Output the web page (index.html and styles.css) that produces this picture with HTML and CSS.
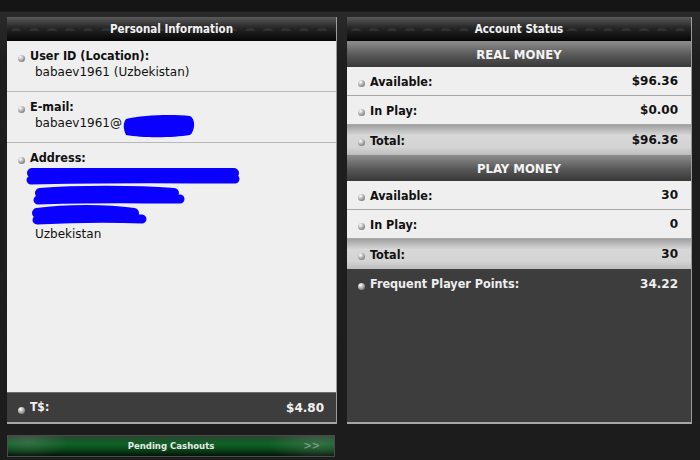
FILE: index.html
```html
<!DOCTYPE html>
<html>
<head>
    <title>Account</title>
    <meta charset="UTF-8">
    <link rel="stylesheet" href="styles.css">
</head>
<body>

<div id="page">

    <div class="column">
        <div class="panel">
            <div class="panel-head">Personal Information</div>
            <div class="info">
                <div class="info-row">
                    <div class="label"><span class="dot"></span>User ID (Location):</div>
                    <div class="value">babaev1961 (Uzbekistan)</div>
                </div>
                <div class="info-row">
                    <div class="label"><span class="dot"></span>E-mail:</div>
                    <div class="value">babaev1961@<svg class="scribble-mail" width="74" height="25" viewBox="0 0 74 25">
                        <path d="M4 5 C20 1 50 0 68 2 C74 5 73 17 68 21 C50 24 20 24 4 21 C1 15 1 9 4 5 Z" fill="#0a00ff"/>
                    </svg></div>
                </div>
                <div class="info-row address">
                    <div class="label"><span class="dot"></span>Address:</div>
                    <svg class="scribble-address" width="220" height="58" viewBox="0 0 220 58">
                        <g stroke="#0a00ff" stroke-linecap="round" fill="none">
                            <path d="M6 5 C60 1 150 2 208 5" stroke-width="10"/>
                            <path d="M5 12 C80 10 150 11 209 11" stroke-width="9"/>
                            <path d="M14 25 C50 22 110 22 148 25" stroke-width="10"/>
                            <path d="M12 32 C60 30 110 31 154 31" stroke-width="9"/>
                            <path d="M11 45 C40 41 80 41 108 45" stroke-width="10"/>
                            <path d="M11 52 C50 50 90 50 116 51" stroke-width="9"/>
                        </g>
                    </svg>
                    <div class="value">Uzbekistan</div>
                </div>
            </div>
            <div class="dark-row">
                <span class="label"><span class="dot"></span>T$:</span>
                <span class="amount">$4.80</span>
            </div>
        </div>
        <div class="cashout">
            Pending Cashouts
            <span class="arrows">&gt;&gt;</span>
        </div>
    </div>

    <div class="panel status">
        <div class="panel-head">Account Status</div>

        <div class="section">REAL MONEY</div>
        <div class="line"><span class="label"><span class="dot"></span>Available:</span><span class="amount">$96.36</span></div>
        <div class="line"><span class="label"><span class="dot"></span>In Play:</span><span class="amount">$0.00</span></div>
        <div class="line total"><span class="label"><span class="dot"></span>Total:</span><span class="amount">$96.36</span></div>

        <div class="section">PLAY MONEY</div>
        <div class="line"><span class="label"><span class="dot"></span>Available:</span><span class="amount">30</span></div>
        <div class="line"><span class="label"><span class="dot"></span>In Play:</span><span class="amount">0</span></div>
        <div class="line total"><span class="label"><span class="dot"></span>Total:</span><span class="amount">30</span></div>

        <div class="line points"><span class="label"><span class="dot"></span>Frequent Player Points:</span><span class="amount">34.22</span></div>
    </div>

</div>

</body>
</html>
```

FILE: styles.css
```css
body{
    margin: 0;
    font-family: "DejaVu Sans", Verdana, sans-serif;
    font-size: 12px;
    color: #111;
    background: linear-gradient(#151515 0, #151515 11px, #2a2a2a 12px, #1e1e1e 60px, #1c1c1c);
    height: 460px;
    overflow: hidden;
}

#page{
    display: grid;
    grid-template-columns: 330px 345px;
    column-gap: 10px;
    padding: 17px 0 0 7px;
}

.column{
    display: flex;
    flex-direction: column;
}

.panel{
    height: 407px;
    box-sizing: border-box;
    display: flex;
    flex-direction: column;
    border-right: 1px solid #9c9c9c;
    border-bottom: 2px solid #a6a6a6;
    background-color: #3d3d3d;
}

.panel-head{
    height: 24px;
    line-height: 24px;
    text-align: center;
    color: #f2f2f2;
    font-family: "DejaVu Sans Condensed", "DejaVu Sans", sans-serif;
    font-weight: bold;
    font-size: 11.5px;
    background:
        radial-gradient(circle at 50% 120%, rgba(255,255,255,0.07) 30%, transparent 32%) 0 0 / 18px 14px,
        linear-gradient(#5a5a5a, #262626 45%, #050505);
}

/* personal info */

.info{
    flex: 1;
    background-color: #efefef;
}

.info-row{
    padding: 6px 8px 10px 11px;
    border-bottom: 1px solid #b8b8b8;
}

.info-row.address{
    border-bottom: none;
    padding-top: 6px;
}

.label{
    display: flex;
    align-items: center;
    line-height: 17px;
    font-family: "DejaVu Sans Condensed", "DejaVu Sans", sans-serif;
    font-weight: bold;
    font-size: 12.5px;
}

.value{
    line-height: 17px;
    padding-left: 17px;
    display: flex;
}

.scribble-mail{
    display: block;
    margin: -1px 0 -7px 0;
}

.scribble-address{
    display: block;
    margin: 2px 0 0 8px;
}

.dot{
    display: inline-block;
    width: 7px;
    height: 7px;
    border-radius: 50%;
    margin: 5px 5px 0 0;
    background: radial-gradient(circle at 35% 30%, #ffffff, #a8a8a8 50%, #5a5a5a);
    flex: none;
}

.dark-row{
    height: 29px;
    display: flex;
    align-items: center;
    justify-content: space-between;
    padding: 0 12px 0 11px;
    border-top: 1px solid #6a6a6a;
    color: #f2f2f2;
    font-weight: bold;
}

.dark-row .label{
    font-size: 12px;
}

.cashout{
    margin-top: 11px;
    height: 22px;
    line-height: 20px;
    width: 328px;
    box-sizing: border-box;
    text-align: center;
    color: #e8e8e8;
    font-family: "DejaVu Sans Condensed", "DejaVu Sans", sans-serif;
    font-size: 9.5px;
    font-weight: bold;
    border: 1px solid #4a4a4a;
    position: relative;
    background:
        radial-gradient(ellipse 40px 16px at 20px 6px, rgba(120,140,125,0.35), transparent),
        radial-gradient(ellipse 50px 18px at 310px 8px, rgba(120,140,125,0.35), transparent),
        linear-gradient(#2c4431, #0d6426 40%, #0a4a1a 65%, #041408);
}

.arrows{
    position: absolute;
    right: 14px;
    top: 0;
    color: #7a9a80;
    font-size: 11px;
}

/* account status */

.status{
    width: 345px;
}

.section{
    height: 26px;
    line-height: 26px;
    text-align: center;
    color: #f4f4f4;
    font-family: "DejaVu Sans Condensed", "DejaVu Sans", sans-serif;
    font-weight: bold;
    font-size: 13px;
    border-top: 1px solid #8a8a8a;
    box-sizing: border-box;
    background: linear-gradient(#8a8a8a, #5a5a5a 50%, #383838);
}

.line{
    height: 29px;
    box-sizing: border-box;
    display: flex;
    align-items: center;
    justify-content: space-between;
    padding: 0 13px 0 11px;
    background-color: #efefef;
    border-bottom: 1px solid #a8a8a8;
}

.line.total{
    height: 30px;
    border-bottom: none;
    background: linear-gradient(#a0a0a0, #d8d8d8 35%, #d4d4d4 75%, #bcbcbc);
}

.line.points{
    background: #3d3d3d;
    color: #eeeeee;
    border-bottom: none;
}

.amount{
    font-weight: bold;
}
```
